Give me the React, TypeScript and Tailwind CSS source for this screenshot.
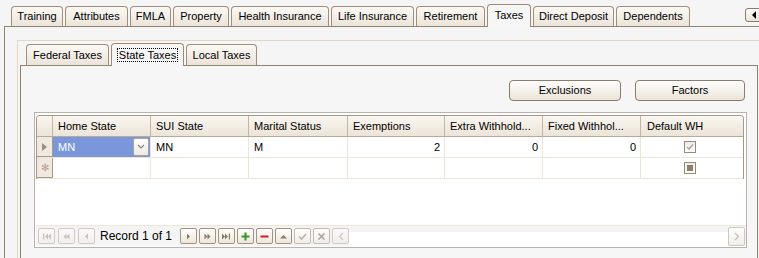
import React from 'react';

type Tab = { label: string; w: string; active?: boolean };

const outerTabs: Tab[] = [
  { label: 'Training', w: 'w-[52px]' },
  { label: 'Attributes', w: 'w-[63px]' },
  { label: 'FMLA', w: 'w-[41px]' },
  { label: 'Property', w: 'w-[56px]' },
  { label: 'Health Insurance', w: 'w-[98px]' },
  { label: 'Life Insurance', w: 'w-[83px]' },
  { label: 'Retirement', w: 'w-[69px]' },
  { label: 'Taxes', w: 'w-[44px]', active: true },
  { label: 'Direct Deposit', w: 'w-[81px]' },
  { label: 'Dependents', w: 'w-[74px]' },
];

const innerTabs: Tab[] = [
  { label: 'Federal Taxes', w: 'w-[83px]' },
  { label: 'State Taxes', w: 'w-[73px]', active: true },
  { label: 'Local Taxes', w: 'w-[71px]' },
];

function TabItem({ tab, short, tall }: { tab: Tab; short: string; tall: string }) {
  if (tab.active) {
    return (
      <div
        className={`${tab.w} ${tall} -mb-px relative z-10 shrink-0 border border-b-0 border-[#9d8b77] rounded-t-[4px] bg-[#f6f6f6] flex items-start justify-center pt-[4px] text-[11px] text-black`}
      >
        {tab.label === 'State Taxes' ? (
          <span className="border border-dotted border-black px-px leading-[12px]">{tab.label}</span>
        ) : (
          <span className="leading-[12px]">{tab.label}</span>
        )}
      </div>
    );
  }
  return (
    <div
      className={`${tab.w} ${short} shrink-0 border border-b-0 border-[#a08e7a] rounded-t-[4px] bg-linear-to-b from-[#fbf9f6] to-[#ebe4d9] flex items-center justify-center text-[11px] text-black`}
    >
      {tab.label}
    </div>
  );
}

const cols = [
  { label: 'Home State', w: 'w-[98px]' },
  { label: 'SUI State', w: 'w-[98px]' },
  { label: 'Marital Status', w: 'w-[99px]' },
  { label: 'Exemptions', w: 'w-[97px]' },
  { label: 'Extra Withhold...', w: 'w-[98px]' },
  { label: 'Fixed Withhol...', w: 'w-[98px]' },
];

function Glyph({ d, color, fill = true }: { d: string; color: string; fill?: boolean }) {
  return (
    <svg width="9" height="9" viewBox="0 0 9 9">
      {fill ? (
        <path d={d} fill={color} />
      ) : (
        <path d={d} fill="none" stroke={color} strokeWidth="1.6" />
      )}
    </svg>
  );
}

function NavBtn({ kind, children }: { kind: 'off' | 'on' | 'dim'; children: React.ReactNode }) {
  const cls =
    kind === 'on'
      ? 'border-[#a4927e] from-white to-[#ede6db]'
      : kind === 'dim'
      ? 'border-[#c4bab0] from-white to-[#f1ede8]'
      : 'border-[#d3cbc3] from-[#fafafa] to-[#f1efec]';
  return (
    <div
      className={`w-[17px] h-[16px] shrink-0 rounded-[2px] border bg-linear-to-b ${cls} flex items-center justify-center`}
    >
      {children}
    </div>
  );
}

function CheckBox({ state }: { state: 'checked' | 'mixed' }) {
  return (
    <div className="w-[12px] h-[12px] border border-[#9a8a7a] bg-linear-to-b from-[#eeebe6] to-white flex items-center justify-center">
      {state === 'checked' ? (
        <svg width="8" height="8" viewBox="0 0 8 8">
          <path d="M1 4 L3 6 L7 1.5" fill="none" stroke="#a8a29c" strokeWidth="1.3" />
        </svg>
      ) : (
        <div className="w-[6px] h-[6px] bg-[#8e7c6c]" />
      )}
    </div>
  );
}

export default function App() {
  const off = '#c9c1b9';
  const on = '#8d7a67';
  return (
    <div className="w-[759px] h-[258px] overflow-hidden bg-[#f5f5f5] font-['Liberation_Sans',_Arial,_sans-serif] text-black">
      {/* outer tab strip */}
      <div className="h-[26px] flex items-end pl-[11px] gap-[2px]">
        {outerTabs.map((t) => (
          <TabItem key={t.label} tab={t} short="h-[20px]" tall="h-[23px]" />
        ))}
        <div className="self-start mt-[8px] ml-auto -mr-[3px] w-[17px] h-[14px] border border-[#8c7a68] rounded-[3px] bg-linear-to-b from-white to-[#ebe4d9] flex items-center justify-center">
          <svg width="6" height="8" viewBox="0 0 6 8">
            <path d="M5 0 L1 4 L5 8Z" fill="#000" />
          </svg>
        </div>
      </div>

      {/* outer tab page */}
      <div className="ml-[4px] h-[232px] border-l border-t border-[#92816d] pt-[13px] pl-[12px]">
        <div className="h-full border-l border-t border-[#e2d6c4] pt-px pl-[2px]">
          {/* inner tab strip */}
          <div className="h-[23px] flex items-end pl-[6px] gap-[2px]">
            {innerTabs.map((t) => (
              <TabItem key={t.label} tab={t} short="h-[21px]" tall="h-[23px]" />
            ))}
          </div>

          {/* inner tab page */}
          <div className="w-[738px] h-[200px] border-l border-t border-r border-[#92816d] bg-[#f6f6f6] pt-[14px]">
            <div className="flex justify-end gap-[14px] pr-[12px]">
              <div className="w-[112px] h-[21px] rounded-[4px] border border-[#8e7c6a] bg-linear-to-b from-white to-[#ebe3d7] flex items-center justify-center text-[11px]">
                Exclusions
              </div>
              <div className="w-[110px] h-[21px] rounded-[4px] border border-[#8e7c6a] bg-linear-to-b from-white to-[#ebe3d7] flex items-center justify-center text-[11px]">
                Factors
              </div>
            </div>

            {/* grid */}
            <div className="mt-[11px] ml-[13px] w-[713px] h-[136px] border border-[#bab2aa] bg-white pt-[2px] pl-px flex flex-col">
              <div className="w-[708px] border-l border-t border-r border-[#a8988a] rounded-t-[4px] overflow-hidden">
                {/* header */}
                <div className="flex h-[21px] border-b border-[#b9a997] bg-linear-to-b from-[#f9f6f1] to-[#ece4d8] text-[11px]">
                  <div className="w-[16px] border-r border-[#c5b5a3]" />
                  {cols.map((c) => (
                    <div key={c.label} className={`${c.w} border-r border-[#c5b5a3] flex items-center pl-[5px] whitespace-nowrap overflow-hidden`}>
                      {c.label}
                    </div>
                  ))}
                  <div className="flex-1 flex items-center pl-[6px]">Default WH</div>
                </div>

                {/* row 1 */}
                <div className="flex h-[21px] border-b border-[#ede5d9] text-[11px]">
                  <div className="w-[16px] border-r border-b border-[#a8988a] bg-[#efe9df] flex items-center justify-center">
                    <svg width="5" height="8" viewBox="0 0 5 8">
                      <path d="M0 0 L5 4 L0 8Z" fill="#9c8c7c" />
                    </svg>
                  </div>
                  <div className="w-[98px] border-r border-[#ede5d9] bg-[#7b97dc] flex items-center justify-between pl-[5px] pr-px text-white">
                    <span>MN</span>
                    <div className="w-[16px] h-[18px] border border-[#a8a2a0] rounded-[2px] bg-linear-to-b from-white to-[#ede9e4] flex items-center justify-center">
                      <svg width="8" height="6" viewBox="0 0 8 6">
                        <path d="M1 1 L4 4 L7 1" fill="none" stroke="#8a8480" strokeWidth="1.2" />
                      </svg>
                    </div>
                  </div>
                  <div className="w-[98px] border-r border-[#ede5d9] flex items-center pl-[5px]">MN</div>
                  <div className="w-[99px] border-r border-[#ede5d9] flex items-center pl-[5px]">M</div>
                  <div className="w-[97px] border-r border-[#ede5d9] flex items-center justify-end pr-[4px]">2</div>
                  <div className="w-[98px] border-r border-[#ede5d9] flex items-center justify-end pr-[4px]">0</div>
                  <div className="w-[98px] border-r border-[#ede5d9] flex items-center justify-end pr-[4px]">0</div>
                  <div className="flex-1 flex items-center justify-center pr-[4px]">
                    <CheckBox state="checked" />
                  </div>
                </div>

                {/* row 2 */}
                <div className="flex h-[21px] border-b border-[#ede5d9] text-[11px]">
                  <div className="w-[16px] border-r border-b border-[#a8988a] bg-[#efe9df] flex items-center justify-center text-[#b4a494] text-[10px] leading-none">
                    ✻
                  </div>
                  <div className="w-[98px] border-r border-[#ede5d9]" />
                  <div className="w-[98px] border-r border-[#ede5d9]" />
                  <div className="w-[99px] border-r border-[#ede5d9]" />
                  <div className="w-[97px] border-r border-[#ede5d9]" />
                  <div className="w-[98px] border-r border-[#ede5d9]" />
                  <div className="w-[98px] border-r border-[#ede5d9]" />
                  <div className="flex-1 flex items-center justify-center pr-[4px]">
                    <CheckBox state="mixed" />
                  </div>
                </div>
              </div>

              {/* navigator */}
              <div className="mt-auto mb-px h-[21px] border-t border-[#efe6d8] bg-[#f4f4f4] flex items-center pl-[2px] pr-px">
                <div className="flex gap-[3px]">
                  <NavBtn kind="off">
                    <Glyph color={off} d="M1 1.5 H2.2 V7.5 H1Z M6 1.5 L3 4.5 L6 7.5Z M9 1.5 L6 4.5 L9 7.5Z" />
                  </NavBtn>
                  <NavBtn kind="off">
                    <Glyph color={off} d="M4.5 1.5 L1.5 4.5 L4.5 7.5Z M7.5 1.5 L4.5 4.5 L7.5 7.5Z" />
                  </NavBtn>
                  <NavBtn kind="off">
                    <Glyph color={off} d="M6 1.5 L3 4.5 L6 7.5Z" />
                  </NavBtn>
                </div>
                <span className="ml-[5px] mr-[8px] text-[12px] whitespace-nowrap">Record 1 of 1</span>
                <div className="flex gap-[2px]">
                  <NavBtn kind="on">
                    <Glyph color={on} d="M3 1.5 L6 4.5 L3 7.5Z" />
                  </NavBtn>
                  <NavBtn kind="on">
                    <Glyph color={on} d="M1.5 1.5 L4.5 4.5 L1.5 7.5Z M4.5 1.5 L7.5 4.5 L4.5 7.5Z" />
                  </NavBtn>
                  <NavBtn kind="on">
                    <Glyph color={on} d="M0 1.5 L3 4.5 L0 7.5Z M3 1.5 L6 4.5 L3 7.5Z M6.8 1.5 H8 V7.5 H6.8Z" />
                  </NavBtn>
                  <NavBtn kind="on">
                    <Glyph color="#2f9a1e" d="M3.5 0.5 H5.5 V3.5 H8.5 V5.5 H5.5 V8.5 H3.5 V5.5 H0.5 V3.5 H3.5Z" />
                  </NavBtn>
                  <NavBtn kind="on">
                    <Glyph color="#d81c1c" d="M0.5 3.5 H8.5 V5.5 H0.5Z" />
                  </NavBtn>
                  <NavBtn kind="on">
                    <Glyph color={on} d="M1 6.5 L4.5 3 L8 6.5Z" />
                  </NavBtn>
                  <NavBtn kind="dim">
                    <Glyph color="#b8b2ac" fill={false} d="M1 4.5 L3.5 7 L8 2" />
                  </NavBtn>
                  <NavBtn kind="dim">
                    <Glyph color="#aaa39c" fill={false} d="M1.5 1.5 L7.5 7.5 M7.5 1.5 L1.5 7.5" />
                  </NavBtn>
                  <NavBtn kind="off">
                    <svg width="6" height="9" viewBox="0 0 6 9">
                      <path d="M5 1 L1.5 4.5 L5 8" fill="none" stroke="#d0c8c0" strokeWidth="1.2" />
                    </svg>
                  </NavBtn>
                </div>
                <div className="flex-1 self-stretch flex items-stretch">
                  <div className="flex-1 mt-[6px] bg-white" />
                  <div className="w-[17px] h-[19px] self-center rounded-[2px] border border-[#cfc7bf] bg-linear-to-b from-white to-[#f1eeea] flex items-center justify-center">
                    <svg width="6" height="9" viewBox="0 0 6 9">
                      <path d="M1 1 L4.5 4.5 L1 8" fill="none" stroke="#c6bcb2" strokeWidth="1.2" />
                    </svg>
                  </div>
                </div>
              </div>
            </div>
          </div>
        </div>
      </div>
    </div>
  );
}
